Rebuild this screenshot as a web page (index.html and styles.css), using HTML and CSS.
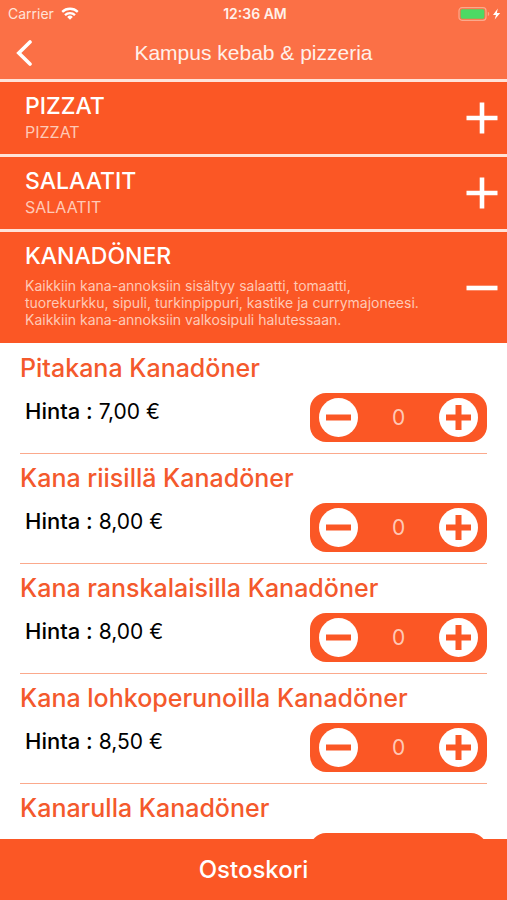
FILE: index.html
```
<!DOCTYPE html>
<html lang="fi">
<head>
<meta charset="utf-8">
<meta name="viewport" content="width=device-width, initial-scale=1">
<title>Kampus kebab &amp; pizzeria</title>
<link rel="stylesheet" href="styles.css">
</head>
<body>
<svg class="sprite" aria-hidden="true">
  <symbol id="plus" viewBox="0 0 32 32"><path d="M16 0.5v31M0.5 16h31" stroke="currentColor" stroke-width="4.6"/></symbol>
  <symbol id="minus" viewBox="0 0 32 32"><path d="M0.5 16h31" stroke="currentColor" stroke-width="4.6"/></symbol>
  <symbol id="round-plus" viewBox="0 0 39 39"><circle cx="19.5" cy="19.5" r="19.5" fill="#fff"/><path d="M19.5 7v25M7 19.5h25" stroke="currentColor" stroke-width="6"/></symbol>
  <symbol id="round-minus" viewBox="0 0 39 39"><circle cx="19.5" cy="19.5" r="19.5" fill="#fff"/><path d="M7 19.5h25" stroke="currentColor" stroke-width="6"/></symbol>
</svg>
<div class="app">
  <header class="top">
    <div class="status">
      <span class="carrier">Carrier
        <svg class="wifi" viewBox="0 0 18 13" aria-hidden="true"><g fill="none" stroke="currentColor" stroke-width="2.3"><path d="M1.2 4.9a11.2 11.2 0 0 1 15.6 0"/><path d="M4 8.1a7.1 7.1 0 0 1 10 0"/></g><path d="M6.2 9.9a4 4 0 0 1 5.6 0L9 12.7z" fill="currentColor"/></svg>
      </span>
      <span class="clock">12:36 AM</span>
      <span class="power">
        <svg class="battery" viewBox="0 0 44 14" aria-hidden="true"><rect x="1" y="0.7" width="27" height="12.6" rx="3" fill="none" stroke="#fba98c" stroke-width="1.2"/><rect x="2.6" y="2.3" width="23.8" height="9.4" rx="1.6" fill="#4cd964"/><path d="M29.8 4.8a2.4 2.4 0 0 1 0 4.4z" fill="#fba98c"/><path d="M39.8 1.6L35 7.9h3l-1.3 4.7L42.2 6h-3.3z" fill="#fff"/></svg>
      </span>
    </div>
    <div class="nav">
      <button class="back" type="button" aria-label="Takaisin"><svg viewBox="0 0 16 26" aria-hidden="true"><path d="M14 2L2.800 13L14 24" fill="none" stroke="currentColor" stroke-width="3.600" stroke-linecap="round"/></svg></button>
      <h1>Kampus kebab &amp; pizzeria</h1>
    </div>
  </header>
  <main class="menu">
    <button class="category" type="button" aria-expanded="false">
      <span class="category-text"><span class="category-name">PIZZAT</span><span class="category-sub">PIZZAT</span></span>
      <svg class="toggle" aria-hidden="true"><use href="#plus"/></svg>
    </button>
    <button class="category" type="button" aria-expanded="false">
      <span class="category-text"><span class="category-name">SALAATIT</span><span class="category-sub">SALAATIT</span></span>
      <svg class="toggle" aria-hidden="true"><use href="#plus"/></svg>
    </button>
    <button class="category" type="button" aria-expanded="true">
      <span class="category-text"><span class="category-name">KANADÖNER</span><span class="category-info">Kaikkiin kana-annoksiin sisältyy salaatti, tomaatti,<br>tuorekurkku, sipuli, turkinpippuri, kastike ja currymajoneesi.<br>Kaikkiin kana-annoksiin valkosipuli halutessaan.</span></span>
      <svg class="toggle" aria-hidden="true"><use href="#minus"/></svg>
    </button>
    <ul class="items">
      <li class="item">
        <h2>Pitakana Kanadöner</h2>
        <div class="row">
          <p class="price"><b>Hinta :</b> 7,00 €</p>
          <div class="stepper"><button type="button" aria-label="Vähennä"><svg aria-hidden="true"><use href="#round-minus"/></svg></button><output>0</output><button type="button" aria-label="Lisää"><svg aria-hidden="true"><use href="#round-plus"/></svg></button></div>
        </div>
      </li>
      <li class="item">
        <h2>Kana riisillä Kanadöner</h2>
        <div class="row">
          <p class="price"><b>Hinta :</b> 8,00 €</p>
          <div class="stepper"><button type="button" aria-label="Vähennä"><svg aria-hidden="true"><use href="#round-minus"/></svg></button><output>0</output><button type="button" aria-label="Lisää"><svg aria-hidden="true"><use href="#round-plus"/></svg></button></div>
        </div>
      </li>
      <li class="item">
        <h2>Kana ranskalaisilla Kanadöner</h2>
        <div class="row">
          <p class="price"><b>Hinta :</b> 8,00 €</p>
          <div class="stepper"><button type="button" aria-label="Vähennä"><svg aria-hidden="true"><use href="#round-minus"/></svg></button><output>0</output><button type="button" aria-label="Lisää"><svg aria-hidden="true"><use href="#round-plus"/></svg></button></div>
        </div>
      </li>
      <li class="item">
        <h2>Kana lohkoperunoilla Kanadöner</h2>
        <div class="row">
          <p class="price"><b>Hinta :</b> 8,50 €</p>
          <div class="stepper"><button type="button" aria-label="Vähennä"><svg aria-hidden="true"><use href="#round-minus"/></svg></button><output>0</output><button type="button" aria-label="Lisää"><svg aria-hidden="true"><use href="#round-plus"/></svg></button></div>
        </div>
      </li>
      <li class="item">
        <h2>Kanarulla Kanadöner</h2>
        <div class="row">
          <div class="stepper"></div>
        </div>
      </li>
    </ul>
  </main>
  <button class="cart" type="button">Ostoskori</button>
</div>
</body>
</html>
```
FILE: styles.css
```
* { box-sizing: border-box; }

body {
  margin: 0;
  background: #fff;
  color: #000;
  font-family: Inter, "Liberation Sans", sans-serif;
}

button {
  margin: 0;
  padding: 0;
  border: 0;
  background: none;
  color: inherit;
  font: inherit;
  cursor: pointer;
}

.sprite { display: none; }

.app {
  display: flex;
  flex-direction: column;
  height: 100vh;
}

.top {
  flex: none;
  background: #fb7046;
  color: #fff;
}

.status {
  display: grid;
  grid-template-columns: 1fr auto 1fr;
  align-items: center;
  height: 27px;
  padding: 0 5px 0 8px;
  font-size: 14px;
}

.carrier {
  display: flex;
  align-items: center;
  gap: 7px;
  color: #ffe3d8;
}

.wifi { width: 18px; height: 13px; color: #fff; }
.clock { font-weight: 600; color: #fff0ea; }
.power { display: flex; justify-content: flex-end; }
.battery { width: 44px; height: 14px; }

.nav {
  display: grid;
  grid-template-columns: 32px 1fr 32px;
  align-items: center;
  height: 52px;
  padding: 0 16px;
}

.back { display: flex; height: 26px; }
.back svg { width: 16px; height: 26px; }

.nav h1 {
  margin: 0;
  text-align: center;
  font: 400 21px/26px "Liberation Sans", sans-serif;
  color: #fff0ea;
}

.menu {
  flex: 1;
  min-height: 0;
  overflow-y: auto;
  scrollbar-width: none;
}

.category {
  display: flex;
  align-items: center;
  justify-content: space-between;
  width: 100%;
  padding: 10px 9px 10px 25px;
  border-top: 3px solid #ffe3d8;
  background: #fb5725;
  color: #fff;
  text-align: left;
}

.category-text, .category-name, .category-sub, .category-info { display: block; }

.category-name {
  font-size: 23px;
  line-height: 28px;
  font-weight: 500;
}

.category-sub {
  font-size: 16px;
  line-height: 24px;
  color: #ffc9b6;
}

.category-info {
  margin: 7px 0 5px;
  font-size: 14px;
  line-height: 17px;
  color: #ffc9b6;
}

.toggle { flex: none; width: 32px; height: 32px; }

.items {
  margin: 0;
  padding: 1px 20px 0;
  list-style: none;
}

.item {
  height: 110px;
  padding-top: 9px;
  border-bottom: 1px solid #fba98c;
}

.item h2 {
  margin: 0;
  font-size: 25px;
  line-height: 30px;
  font-weight: 500;
  color: #f4592c;
}

.row {
  display: flex;
  justify-content: space-between;
  padding-top: 10px;
}

.price {
  margin: 0;
  padding-left: 5px;
  font-size: 21px;
  line-height: 36px;
}

.price b { font-size: 22px; font-weight: 500; }

.stepper {
  display: flex;
  align-items: center;
  justify-content: space-between;
  width: 177px;
  height: 49px;
  margin-left: auto;
  padding: 0 9px;
  border-radius: 16px;
  background: #fb5725;
  color: #ffc9b6;
  font-size: 21px;
}

.stepper button { display: flex; color: #fb5725; }
.stepper svg { width: 39px; height: 39px; }

.cart {
  flex: none;
  height: 61px;
  background: #fb5725;
  color: #fff;
  font-size: 24px;
  font-weight: 500;
}
```
